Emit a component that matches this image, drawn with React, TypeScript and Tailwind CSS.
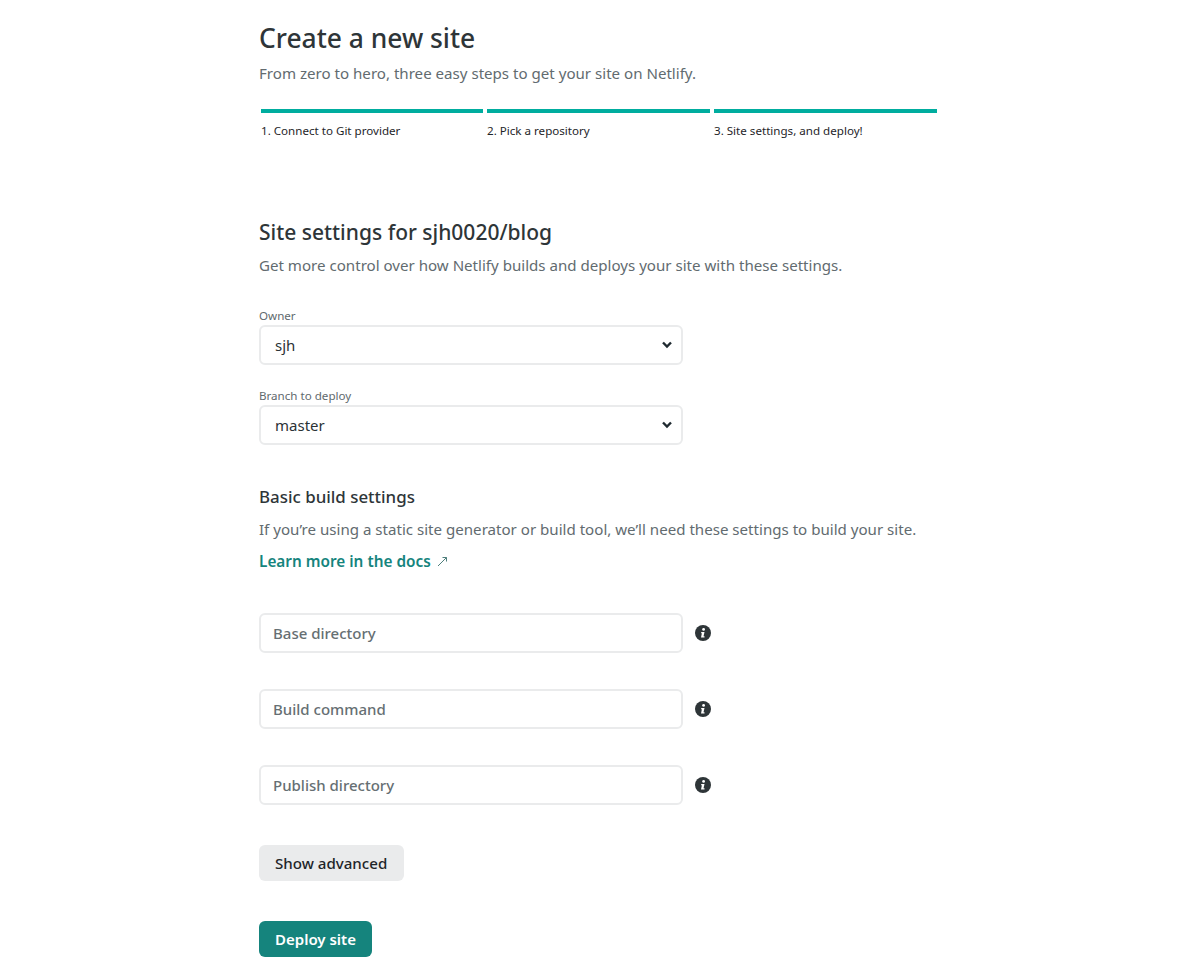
import React from "react";

function Info() {
  return (
    <svg viewBox="0 0 16 16" className="w-4 h-4 ml-3 shrink-0" aria-hidden="true">
      <circle cx="8" cy="8" r="8" fill="#2e3538" />
      <circle cx="8.6" cy="4.4" r="1.4" fill="#fff" />
      <path d="M6.3 7h3.2l-1 4.2h1v1.2H6l.9-4.2h-.9z" fill="#fff" />
    </svg>
  );
}

function Chevron() {
  return (
    <svg viewBox="0 0 10 8" className="w-[10px] h-[8px] absolute right-[9px] top-[14px] pointer-events-none" aria-hidden="true">
      <path d="M1 1.5l4 4 4-4" fill="none" stroke="#1f2a30" strokeWidth="2.4" />
    </svg>
  );
}

function Select({ label, value, className }: { label: string; value: string; className?: string }) {
  return (
    <div className={className}>
      <div className="text-[11.6px] leading-[17px] pb-px text-[#5f6a6e]">{label}</div>
      <div className="relative w-[424px] h-[40px] border-2 border-[#eaebec] rounded-[6px] bg-white flex items-center pl-[14px] text-[15px] text-[#2b3236]">
        {value}
        <Chevron />
      </div>
    </div>
  );
}

function Field({ placeholder, className }: { placeholder: string; className?: string }) {
  return (
    <div className={"flex items-center " + (className ?? "")}>
      <input
        placeholder={placeholder}
        className="w-[424px] h-[40px] border-2 border-[#eaebec] rounded-[6px] bg-white pl-3 text-[15px] font-medium outline-none placeholder:text-[#666f73]"
      />
      <Info />
    </div>
  );
}

export default function App() {
  return (
    <div className="w-[1198px] h-[964px] overflow-hidden bg-white font-['Noto_Sans',sans-serif] text-[#2e3538]">
      <div className="w-[680px] ml-[259px] pt-[20px]">
        <h1 className="text-[26.4px] leading-[36px] font-medium">Create a new site</h1>
        <p className="text-[15.1px] leading-[24px] mt-[5px] text-[#626b6f]">From zero to hero, three easy steps to get your site on Netlify.</p>
        <div className="grid grid-cols-[222px_223px_223px] gap-1 ml-[2px] mt-[24px]">
          {["1. Connect to Git provider", "2. Pick a repository", "3. Site settings, and deploy!"].map((s) => (
            <div key={s}>
              <div className="h-1 bg-[#00ad9f]" />
              <div className="text-[11.6px] leading-[16px] mt-[10px] text-[#1e2529]">{s}</div>
            </div>
          ))}
        </div>
        <h2 className="text-[21px] leading-[28px] font-medium mt-[79px]">Site settings for sjh0020/blog</h2>
        <p className="text-[15.1px] leading-[24px] mt-[7px] text-[#626b6f]">Get more control over how Netlify builds and deploys your site with these settings.</p>
        <Select className="mt-[30px]" label="Owner" value="sjh" />
        <Select className="mt-[22px]" label="Branch to deploy" value="master" />
        <h3 className="text-[16.9px] leading-[24px] font-medium mt-[40px]">Basic build settings</h3>
        <p className="text-[15.1px] leading-[24px] mt-[8px] text-[#626b6f]">If you’re using a static site generator or build tool, we’ll need these settings to build your site.</p>
        <a className="flex items-center text-[15.35px] leading-[24px] font-semibold mt-[8px] text-[#15847d]">
          Learn more in the docs
          <svg viewBox="0 0 11 11" className="w-[11px] h-[11px] ml-[6px] mt-px" aria-hidden="true">
            <path d="M1 10L9.5 1.5M5.5 1.5h4v4" fill="none" stroke="#4f7f7c" strokeWidth="1" />
          </svg>
        </a>
        <Field className="mt-[40px]" placeholder="Base directory" />
        <Field className="mt-[36px]" placeholder="Build command" />
        <Field className="mt-[36px]" placeholder="Publish directory" />
        <button className="block mt-[40px] h-[36px] pl-4 pr-[17px] rounded-[6px] bg-[#eaebec] text-[15.1px] font-medium text-[#1e2529]">Show advanced</button>
        <button className="block mt-[40px] h-[36px] px-4 rounded-[6px] bg-[#15847d] text-[15px] font-semibold text-white">Deploy site</button>
      </div>
    </div>
  );
}
